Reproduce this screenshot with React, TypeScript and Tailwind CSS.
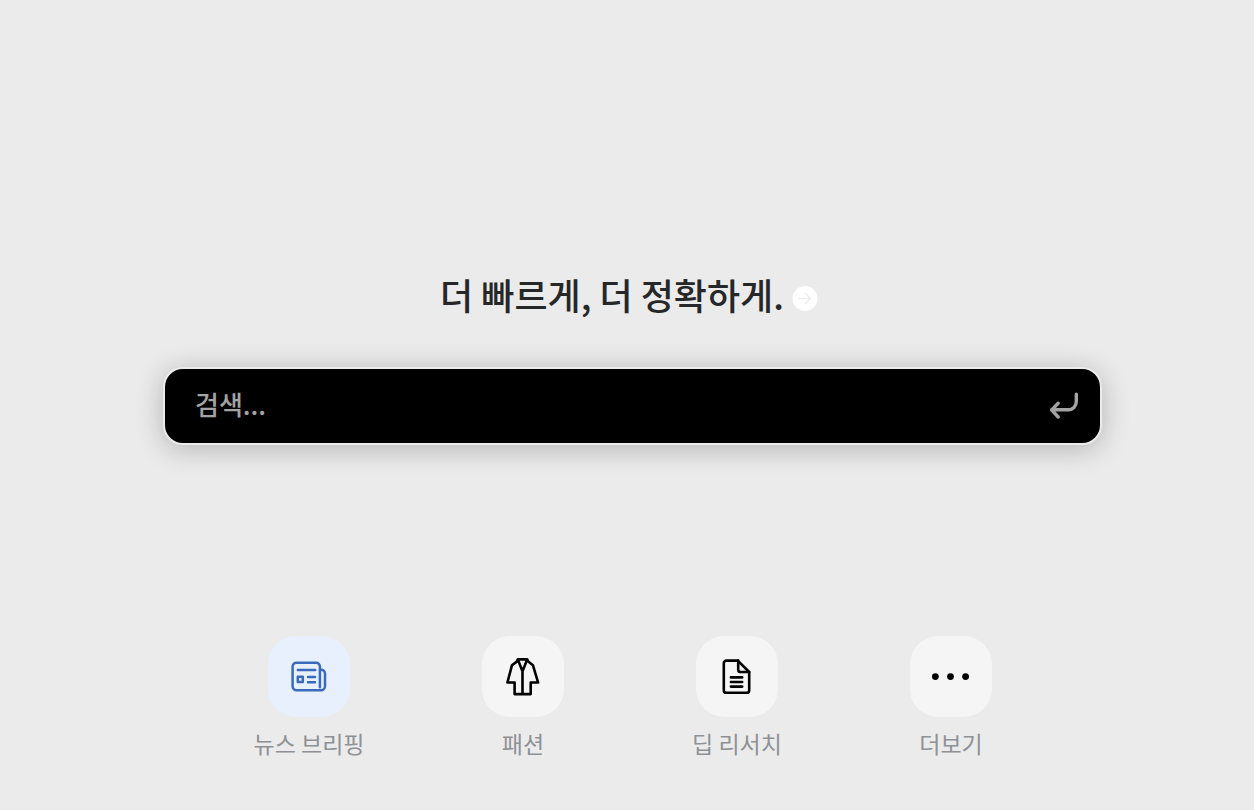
import { useState } from "react";
import type { FormEvent, ReactNode } from "react";

function ArrowCircle() {
  return (
    <svg viewBox="0 0 26 26" className="size-[26px]" aria-hidden="true">
      <circle cx="13" cy="13.5" r="12.5" fill="#ffffff" />
      <path
        d="M7 13.5h11.5M13.5 8.5l5 5-5 5"
        fill="none"
        stroke="#ededed"
        strokeWidth="1.5"
        strokeLinecap="round"
        strokeLinejoin="round"
      />
    </svg>
  );
}

function ReturnIcon() {
  return (
    <svg
      viewBox="0 0 30 28"
      className="h-7 w-[30px]"
      fill="none"
      stroke="#a3a3a3"
      strokeWidth="3.4"
      strokeLinecap="round"
      strokeLinejoin="round"
      aria-hidden="true"
    >
      <path d="M27.3 2.3v7.5a8 8 0 0 1-8 8H2.8" />
      <path d="M9.2 11.2 2.8 18l6.4 7" />
    </svg>
  );
}

function NewsIcon() {
  return (
    <svg
      viewBox="0 0 36 32"
      className="h-8 w-9"
      fill="none"
      stroke="#3a6bba"
      strokeWidth="2.5"
      strokeLinecap="round"
      strokeLinejoin="round"
      aria-hidden="true"
    >
      <path d="M28.9 26.3V5.5a3.8 3.8 0 0 0-3.8-3.8H5.4a3.8 3.8 0 0 0-3.8 3.8v19.8a4 4 0 0 0 4 4h24.4a4 4 0 0 0 4-4V12.6a3.8 3.8 0 0 0-3.8-3.8h-1" />
      <path d="M6.8 9h17.4M17 16h7M17 21.2h7M6.8 15.8h5v5.2h-5z" />
    </svg>
  );
}

function CoatIcon() {
  return (
    <svg
      viewBox="0 0 34 38"
      className="h-[38px] w-[34px]"
      fill="none"
      stroke="#000000"
      strokeWidth="2.6"
      strokeLinejoin="round"
      aria-hidden="true"
    >
      <path d="M11.8 1.4h9.4l1.1 2.2 4.6 3.6L32.1 24.5H24.7v11.6H8.6V24.5H1.4L6 7.2l4.8-3.6z" />
      <path d="M11.8 1.6 16.5 13.2l4.7-11.6M16.5 12.5v23.6" />
    </svg>
  );
}

function DocumentIcon() {
  return (
    <svg
      viewBox="0 0 30 36"
      className="h-9 w-[30px]"
      fill="none"
      stroke="#000000"
      strokeWidth="2.6"
      strokeLinecap="round"
      strokeLinejoin="round"
      aria-hidden="true"
    >
      <path d="M15.8 1.6H4.4A2.6 2.6 0 0 0 1.8 4.2v27A2.6 2.6 0 0 0 4.4 33.8h20.2a2.6 2.6 0 0 0 2.6-2.6V13z" />
      <path d="M16.2 1.6v8.8a2.6 2.6 0 0 0 2.6 2.6h8.4M8.9 18.4h11.3M8.9 23h11.3M8.9 27.6h11.3" />
    </svg>
  );
}

function DotsIcon() {
  return (
    <svg viewBox="0 0 38 8" className="h-2 w-[38px]" fill="#000000" aria-hidden="true">
      <circle cx="3.4" cy="3.6" r="3.4" />
      <circle cx="18.5" cy="3.6" r="3.4" />
      <circle cx="33.6" cy="3.6" r="3.4" />
    </svg>
  );
}

const shortcuts: { label: string; icon: ReactNode; tile: string }[] = [
  { label: "뉴스 브리핑", icon: <NewsIcon />, tile: "bg-[#e8f0fe]" },
  { label: "패션", icon: <CoatIcon />, tile: "bg-[#f5f5f5]" },
  { label: "딥 리서치", icon: <DocumentIcon />, tile: "bg-[#f5f5f5]" },
  { label: "더보기", icon: <DotsIcon />, tile: "bg-[#f5f5f5]" },
];

export default function App() {
  const [query, setQuery] = useState("");

  return (
    <main className="flex min-h-screen flex-col bg-[#ebebeb] pt-[270px] font-['Noto_Sans_CJK_KR',sans-serif]">
      <div className="flex items-center justify-center gap-2 pl-1">
        <h1 className="pb-2 text-4xl leading-[48px] font-medium text-[#262728]">더 빠르게, 더 정확하게.</h1>
        <button type="button" aria-label="자세히">
          <ArrowCircle />
        </button>
      </div>

      <div className="mt-[41px] pr-[152px] pl-[163px]">
        <form
          onSubmit={(e: FormEvent) => e.preventDefault()}
          className="flex h-[78px] items-center rounded-[20px] border-2 border-[#ebebec] bg-black pr-[21px] pl-[30px] shadow-[0_4px_28px_rgba(0,0,0,0.24)]"
        >
          <input
            type="text"
            aria-label="검색"
            placeholder="검색..."
            value={query}
            onChange={(e) => setQuery(e.target.value)}
            className="min-w-0 flex-1 bg-transparent pb-1 text-[26px] leading-9 font-medium text-white outline-none placeholder:text-[#a3a3a3]"
          />
          <button type="submit" aria-label="입력">
            <ReturnIcon />
          </button>
        </form>
      </div>

      <nav className="mt-[191px] flex justify-center pl-1.5">
        {shortcuts.map((item) => (
          <a key={item.label} href="#" className="flex w-[214px] flex-col items-center gap-2.5">
            <span className={`flex h-[81px] w-[82px] items-center justify-center rounded-[28px] ${item.tile}`}>
              {item.icon}
            </span>
            <span className="text-[23px] leading-8 text-[#8e9195]">{item.label}</span>
          </a>
        ))}
      </nav>
    </main>
  );
}
